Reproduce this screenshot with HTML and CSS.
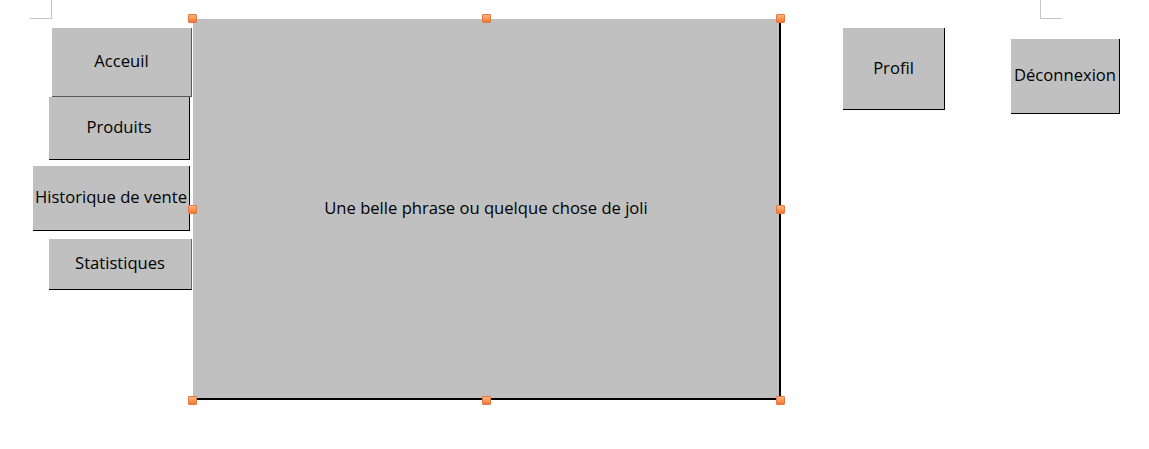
FILE: index.html
```html
<!DOCTYPE html>
<html lang="fr">
<head>
<meta charset="utf-8">
<title>Maquette</title>
<link rel="stylesheet" href="styles.css">
</head>
<body>
<div class="canvas">
  <span class="corner corner-left"></span>
  <span class="corner corner-right"></span>

  <div class="shape btn btn-accueil">Acceuil</div>
  <div class="shape btn btn-produits">Produits</div>
  <div class="shape btn btn-historique">Historique de vente</div>
  <div class="shape btn btn-stats">Statistiques</div>

  <div class="shape main-box">Une belle phrase ou quelque chose de joli</div>

  <div class="shape btn btn-profil">Profil</div>
  <div class="shape btn btn-logout">Déconnexion</div>

  <span class="handle h-tl"></span>
  <span class="handle h-tc"></span>
  <span class="handle h-tr"></span>
  <span class="handle h-ml"></span>
  <span class="handle h-mr"></span>
  <span class="handle h-bl"></span>
  <span class="handle h-bc"></span>
  <span class="handle h-br"></span>
</div>
</body>
</html>
```

FILE: styles.css
```css
* { box-sizing: border-box; }

html, body {
  margin: 0;
  padding: 0;
  background: #ffffff;
}

.canvas {
  position: relative;
  width: 1149px;
  height: 449px;
  overflow: hidden;
  font-family: "Open Sans", "Noto Sans", sans-serif;
  font-size: 16.6px;
  line-height: 1;
  color: #000000;
}

.corner {
  position: absolute;
  top: 0;
  width: 22px;
  height: 19px;
  border-bottom: 1px solid #c6c6c6;
}
.corner-left {
  left: 30px;
  border-right: 1px solid #c6c6c6;
}
.corner-right {
  left: 1040px;
  border-left: 1px solid #c6c6c6;
}

.shape {
  position: absolute;
  display: flex;
  align-items: center;
  justify-content: center;
  background: #c0c0c0;
  white-space: nowrap;
  padding-bottom: 2px;
}

.btn {
  border-right: 1px solid #000000;
  border-bottom: 1px solid #000000;
}

.btn-accueil {
  left: 52px; top: 28px; width: 140px; height: 69px;
  border-color: #5a5a5a;
}
.btn-produits {
  left: 49px; top: 97px; width: 141px; height: 63px;
}
.btn-historique {
  left: 33px; top: 166px; width: 157px; height: 65px;
}
.btn-stats {
  left: 49px; top: 239px; width: 143px; height: 51px;
  border-right-color: #6a6a6a;
}
.btn-profil {
  left: 843px; top: 28px; width: 102px; height: 82px;
  padding-bottom: 0;
}
.btn-logout {
  left: 1011px; top: 39px; width: 109px; height: 75px;
}

.main-box {
  left: 193px;
  top: 19px;
  width: 588px;
  height: 381px;
  border-right: 2px solid #000000;
  border-bottom: 2px solid #000000;
  padding-bottom: 0;
}

.handle {
  position: absolute;
  width: 9px;
  height: 9px;
  margin-left: -4px;
  margin-top: -4px;
  background: linear-gradient(#ffb679, #f5772c);
  border: 1px solid #e0784a;
  border-radius: 1px;
}
.h-tl { left: 192px; top: 18px; }
.h-tc { left: 486px; top: 18px; }
.h-tr { left: 780px; top: 18px; }
.h-ml { left: 192px; top: 209px; }
.h-mr { left: 780px; top: 209px; }
.h-bl { left: 192px; top: 400px; }
.h-bc { left: 486px; top: 400px; }
.h-br { left: 780px; top: 400px; }
```
